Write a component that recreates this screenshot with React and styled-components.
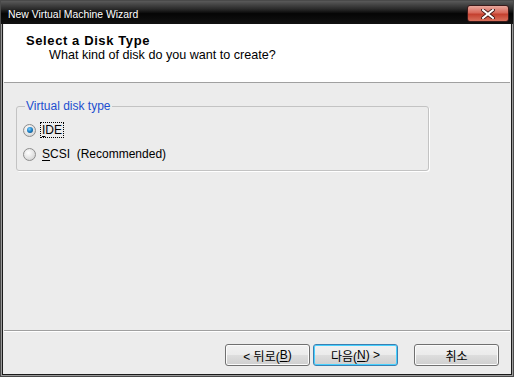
import styled, { createGlobalStyle } from "styled-components";

const Global = createGlobalStyle`
  html, body { margin: 0; padding: 0; background: #ececec; }
  body { font-family: "Liberation Sans", "Noto Sans CJK KR", sans-serif; }
`;

const Window = styled.div`
  width: 514px;
  height: 377px;
  box-sizing: border-box;
  display: flex;
  flex-direction: column;
  background: #ececec;
  border: 1px solid #4a4a4a;
  box-shadow: inset 0 0 0 1px #9a9a9a, inset 0 0 0 2px #1a1a1a;
  padding: 0 3px 3px 3px;
  overflow: hidden;
`;

const TitleBar = styled.div`
  height: 23px;
  margin: 0 -3px;
  padding: 0 4px 0 7px;
  display: flex;
  align-items: center;
  justify-content: space-between;
  background: linear-gradient(180deg, #5a5a5a 0%, #2a2a2a 35%, #050505 55%, #111 100%);
  color: #fff;
  font-size: 10.4px;
`;

const TitleText = styled.span`
  padding-top: 3px;
`;

const CloseButton = styled.div`
  width: 40px;
  height: 15px;
  margin-top: 2px;
  border: 1px solid #3a1a1a;
  border-radius: 3px;
  display: flex;
  align-items: center;
  justify-content: center;
  background: linear-gradient(180deg, #e8a79c 0%, #d8685a 45%, #c4402f 55%, #d8705c 100%);
`;

const Header = styled.div`
  height: 59px;
  background: #fff;
  padding: 10px 0 0 22px;
  box-sizing: border-box;
  border-bottom: 1px solid #a0a0a0;
`;

const HeaderTitle = styled.div`
  font-weight: bold;
  font-size: 13px;
  letter-spacing: 0.6px;
  line-height: 14px;
  color: #000;
`;

const HeaderSub = styled.div`
  font-size: 12.6px;
  line-height: 15px;
  padding-left: 23px;
  color: #000;
`;

const Body = styled.div`
  flex: 1;
  padding: 16px 0 0 12px;
`;

const GroupBox = styled.fieldset`
  width: 413px;
  height: 72px;
  box-sizing: border-box;
  margin: 0;
  padding: 9px 0 0 6px;
  border: 1px solid #c3c3c3;
  border-radius: 3px;
  box-shadow: 1px 1px 0 #fff;
  display: flex;
  flex-direction: column;
  gap: 8px;
`;

const Legend = styled.legend`
  font-size: 12px;
  color: #1c4fcf;
  padding: 0 1px;
  margin-left: 2px;
`;

const Option = styled.div`
  display: flex;
  align-items: center;
  gap: 5px;
  font-size: 12px;
  height: 16px;
`;

const Radio = styled.span`
  width: 11px;
  height: 11px;
  border-radius: 50%;
  border: 1px solid #8d8d8d;
  background: radial-gradient(circle at 40% 35%, #fff 0%, #e0e0e0 60%, #c8c8c8 100%);
  display: flex;
  align-items: center;
  justify-content: center;
  &::after {
    content: "";
    display: ${(p) => (p.checked ? "block" : "none")};
    width: 6px;
    height: 6px;
    border-radius: 50%;
    background: radial-gradient(circle at 40% 35%, #7fd0ff 0%, #1b7fc4 50%, #0a3c66 100%);
  }
`;

const Label = styled.span`
  outline: ${(p) => (p.focused ? "1px dotted #000" : "none")};
  outline-offset: 0;
  padding: 0 1px;
  line-height: 14px;
`;

const Footer = styled.div`
  height: 43px;
  border-top: 1px solid #a0a0a0;
  box-shadow: inset 0 1px 0 #fff;
  display: flex;
  align-items: flex-start;
  justify-content: flex-end;
  padding: 13px 11px 0 0;
  box-sizing: border-box;
`;

const Button = styled.button`
  width: 85px;
  height: 22px;
  margin-left: ${(p) => p.gap || 0}px;
  border: 1px solid ${(p) => (p.primary ? "#3c7fb1" : "#707070")};
  border-radius: 3px;
  background: linear-gradient(180deg, #f2f2f2 0%, #ebebeb 48%, #dddddd 52%, #cfcfcf 100%);
  box-shadow: ${(p) => (p.primary ? "inset 0 0 0 1px #48d1ff" : "inset 0 0 0 1px #fbfbfb")};
  font-family: "Liberation Sans", "Noto Sans CJK KR", sans-serif;
  font-size: 12px;
  color: #000;
  padding: 0;
  display: flex;
  align-items: center;
  justify-content: center;
`;

const U = styled.u`
  text-underline-offset: 2px;
`;

function CloseIcon() {
  return (
    <svg width="14" height="10" viewBox="0 0 14 10">
      <path d="M2 1 L12 9 M12 1 L2 9" stroke="#3a1010" strokeWidth="3.6" strokeLinecap="square" />
      <path d="M2 1 L12 9 M12 1 L2 9" stroke="#fff" strokeWidth="2" strokeLinecap="square" />
    </svg>
  );
}

export default function App() {
  return (
    <>
      <Global />
      <Window>
        <TitleBar>
          <TitleText>New Virtual Machine Wizard</TitleText>
          <CloseButton>
            <CloseIcon />
          </CloseButton>
        </TitleBar>
        <Header>
          <HeaderTitle>Select a Disk Type</HeaderTitle>
          <HeaderSub>What kind of disk do you want to create?</HeaderSub>
        </Header>
        <Body>
          <GroupBox>
            <Legend>Virtual disk type</Legend>
            <Option>
              <Radio checked />
              <Label focused>
                <U>I</U>DE
              </Label>
            </Option>
            <Option>
              <Radio />
              <Label>
                <U>S</U>CSI&nbsp;&nbsp;(Recommended)
              </Label>
            </Option>
          </GroupBox>
        </Body>
        <Footer>
          <Button>&lt; 뒤로(<U>B</U>)</Button>
          <Button primary gap={3}>
            다음(<U>N</U>) &gt;
          </Button>
          <Button gap={16}>취소</Button>
        </Footer>
      </Window>
    </>
  );
}
